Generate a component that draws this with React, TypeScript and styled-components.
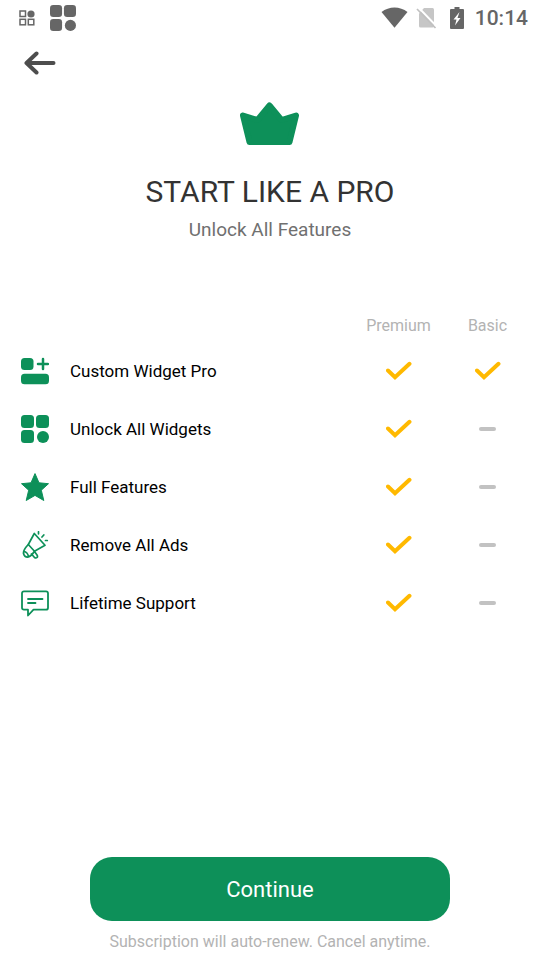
import React from "react";
import styled, { createGlobalStyle } from "styled-components";

const GREEN = "#0d9059";

const GlobalStyle = createGlobalStyle`
  *, *::before, *::after { box-sizing: border-box; }
  body { margin: 0; background: #fff; font-family: Roboto, sans-serif; }
  svg { display: block; }
`;

const Page = styled.div`
  display: flex;
  flex-direction: column;
  min-height: 100vh;
`;

const StatusBar = styled.div`
  display: flex;
  align-items: center;
  height: 36px;
  padding: 0 12px 0 19px;
  color: #666;
`;

const Notifications = styled.div`
  display: flex;
  flex: 1;
  align-items: center;
  gap: 15px;
`;

const SystemIcons = styled.div`
  display: flex;
  align-items: center;
  gap: 8px;
`;

const Clock = styled.time`
  padding-left: 3px;
  font-size: 21px;
  font-weight: 500;
  line-height: 38px;
`;

const TopBar = styled.nav`
  display: flex;
  padding: 10px 24px;
`;

const BackButton = styled.button`
  padding: 4px 0;
  border: 0;
  background: none;
  cursor: pointer;
`;

const Hero = styled.header`
  display: flex;
  flex-direction: column;
  align-items: center;
  padding-top: 12px;
`;

const Title = styled.h1`
  margin: 26px 0 0;
  color: #333;
  font-size: 30px;
  font-weight: 400;
  line-height: 40px;
`;

const Subtitle = styled.p`
  margin: 6px 0 0;
  color: #707070;
  font-size: 19px;
  line-height: 24px;
`;

const Comparison = styled.main`
  flex: 1;
  padding: 66px 8px 24px 21px;
`;

const FeatureTable = styled.table`
  width: 100%;
  border-collapse: collapse;
  table-layout: fixed;
`;

const PlanHeading = styled.th<{ $wide?: boolean }>`
  width: ${(p) => (p.$wide ? "auto" : "89px")};
  height: 34px;
  padding: 0;
  color: #b3b3b3;
  font-size: 16px;
  font-weight: 400;
  text-align: center;
`;

const FeatureCell = styled.th`
  height: 58px;
  padding: 0;
  color: #000;
  font-size: 17px;
  font-weight: 400;
  text-align: left;
`;

const FeatureLabel = styled.span`
  display: flex;
  align-items: center;
  gap: 21px;
`;

const PlanCell = styled.td`
  padding: 0;

  svg { margin: 0 auto; }
`;

const Footer = styled.footer`
  display: flex;
  flex-direction: column;
  align-items: center;
  padding: 0 24px 8px;
`;

const ContinueButton = styled.button`
  width: 100%;
  max-width: 360px;
  height: 64px;
  border: 0;
  border-radius: 22px;
  background: ${GREEN};
  color: #fff;
  font-family: inherit;
  font-size: 22px;
  cursor: pointer;
`;

const Terms = styled.p`
  margin: 10px 0 0;
  color: #b3b3b3;
  font-size: 16px;
  line-height: 21px;
`;

const SmallWidgets = () => (
  <svg width="16" height="16" viewBox="0 0 16 16" fill="none" stroke="currentColor" strokeWidth="1.5" aria-hidden="true">
    <rect x="1" y="1" width="5.5" height="5.5" />
    <rect x="1" y="9.3" width="5.5" height="5.5" />
    <rect x="9.3" y="9.3" width="5.5" height="5.5" />
    <circle cx="12" cy="4" r="3.6" fill="currentColor" stroke="none" />
  </svg>
);

const Widgets = ({ size }: { size: number }) => (
  <svg width={size} height={size} viewBox="0 0 28 28" fill="currentColor" aria-hidden="true">
    <rect width="13" height="13" rx="3.5" />
    <rect x="15" width="13" height="13" rx="3.5" />
    <rect y="15" width="13" height="13" rx="3.5" />
    <circle cx="22" cy="22" r="6" />
  </svg>
);

const Wifi = () => (
  <svg width="27" height="22" viewBox="0 0 27 22" fill="currentColor" aria-hidden="true">
    <path d="M.5 5C8-1 19-1 26.500 5L13.500 20.800Z" />
  </svg>
);

const NoSim = () => (
  <svg width="26" height="22" viewBox="0 0 26 22" aria-hidden="true">
    <path d="M8 1h8.500q1.500 0 1.500 1.500V19q0 1.500-1.500 1.500h-12Q3 20.500 3 19V6.500Z" fill="#c6c6c6" />
    <path d="M2.500 .5 21 19.800" stroke="#fff" strokeWidth="2" />
    <path d="M1 2 19.500 21" stroke="#c0c0c0" strokeWidth="1.700" />
  </svg>
);

const Battery = () => (
  <svg width="14" height="22" viewBox="0 0 14 22" aria-hidden="true">
    <path d="M4.500 0h5v2H13q1 0 1 1v18q0 1-1 1H1q-1 0-1-1V3q0-1 1-1h3.500Z" fill="currentColor" />
    <path d="M9.500 5 3.500 12.500h3L5 18.500l5.500-7.500h-3Z" fill="#fff" />
  </svg>
);

const BackArrow = () => (
  <svg width="32" height="26" viewBox="0 0 32 26" fill="none" stroke="#4d4d4d" strokeWidth="4" strokeLinecap="round" strokeLinejoin="round" aria-hidden="true">
    <path d="M29.500 13H2.500M12.500 3.500 2.500 13l10 9.500" />
  </svg>
);

const Crown = () => (
  <svg width="60" height="44" viewBox="0 0 60 44" fill={GREEN} stroke={GREEN} strokeWidth="6" strokeLinejoin="round" aria-hidden="true">
    <path d="M3 13.500 17.500 18 29.500 3.500 41.500 18 56 13.500 49.500 40H9.500Z" />
  </svg>
);

const AddWidget = () => (
  <svg width="28" height="28" viewBox="0 0 28 28" fill={GREEN} aria-hidden="true">
    <rect y="1" width="12.500" height="12" rx="3.500" />
    <rect y="16.700" width="28" height="10.500" rx="3.500" />
    <path d="M22 2v10M17 7h10" stroke={GREEN} strokeWidth="2.500" strokeLinecap="round" />
  </svg>
);

const Star = () => (
  <svg width="28" height="28" viewBox="0 0 28 28" fill={GREEN} stroke={GREEN} strokeWidth="1" strokeLinejoin="round" aria-hidden="true">
    <path d="m14 .6 4 9.200 9.500.9-7.200 6.500 2.500 10.300L14 22.400l-8.800 5.100 2.500-10.300L.5 10.700l9.500-.9Z" />
  </svg>
);

const Megaphone = () => (
  <svg width="28" height="28" viewBox="0 0 28 28" fill="none" stroke={GREEN} strokeWidth="1.700" strokeLinecap="round" strokeLinejoin="round" aria-hidden="true">
    <path d="M13.300 2.500 24 14.300 13.500 20.300 7.300 13.500Z" />
    <path d="M7.300 13.500Q2 19 2.500 22.500q1 4 5 3.500 3-1 6-5.700M3 20.500q3.500 .5 4.500 5M10.500 23l3 3.500q1.500 1 2.500 0t0-2.500L13.500 20.500" />
    <path d="M17.500.8v2M22.800 4 21 6M24.500 9.500h1.800" />
  </svg>
);

const Message = () => (
  <svg width="28" height="28" viewBox="0 0 28 28" fill="none" stroke={GREEN} strokeWidth="1.800" strokeLinecap="round" strokeLinejoin="round" aria-hidden="true">
    <path d="M3 2.300h22q2 0 2 2v14.400q0 2-2 2H12.500L7 26.500v-5.800H3q-2 0-2-2V4.300q0-2 2-2ZM7 10h14.500M7 14h7.500" />
  </svg>
);

const Check = () => (
  <svg width="26" height="20" viewBox="0 0 26 20" fill="none" stroke="#ffb900" strokeWidth="4" role="img" aria-label="Included" strokeLinecap="round">
    <path d="M2 9.500 9 16.200 23.500 2.800" />
  </svg>
);

const Dash = () => (
  <svg width="18" height="4" viewBox="0 0 18 4" role="img" aria-label="Not included">
    <rect width="17" height="4" rx="2" fill="#c2c2c2" />
  </svg>
);

const GreenWidgets = styled.span`
  color: ${GREEN};
`;

const features = [
  { label: "Custom Widget Pro", icon: <AddWidget />, basic: true },
  { label: "Unlock All Widgets", icon: <GreenWidgets><Widgets size={28} /></GreenWidgets>, basic: false },
  { label: "Full Features", icon: <Star />, basic: false },
  { label: "Remove All Ads", icon: <Megaphone />, basic: false },
  { label: "Lifetime Support", icon: <Message />, basic: false },
];

export default function App() {
  return (
    <Page>
      <GlobalStyle />
      <StatusBar>
        <Notifications>
          <SmallWidgets />
          <Widgets size={26} />
        </Notifications>
        <SystemIcons>
          <Wifi />
          <NoSim />
          <Battery />
          <Clock>10:14</Clock>
        </SystemIcons>
      </StatusBar>
      <TopBar>
        <BackButton type="button" aria-label="Back"><BackArrow /></BackButton>
      </TopBar>
      <Hero>
        <Crown />
        <Title>START LIKE A PRO</Title>
        <Subtitle>Unlock All Features</Subtitle>
      </Hero>
      <Comparison>
        <FeatureTable>
          <thead>
            <tr>
              <PlanHeading $wide as="td" />
              <PlanHeading scope="col">Premium</PlanHeading>
              <PlanHeading scope="col">Basic</PlanHeading>
            </tr>
          </thead>
          <tbody>
            {features.map((f) => (
              <tr key={f.label}>
                <FeatureCell scope="row">
                  <FeatureLabel>{f.icon}{f.label}</FeatureLabel>
                </FeatureCell>
                <PlanCell><Check /></PlanCell>
                <PlanCell>{f.basic ? <Check /> : <Dash />}</PlanCell>
              </tr>
            ))}
          </tbody>
        </FeatureTable>
      </Comparison>
      <Footer>
        <ContinueButton type="button">Continue</ContinueButton>
        <Terms>Subscription will auto-renew. Cancel anytime.</Terms>
      </Footer>
    </Page>
  );
}
